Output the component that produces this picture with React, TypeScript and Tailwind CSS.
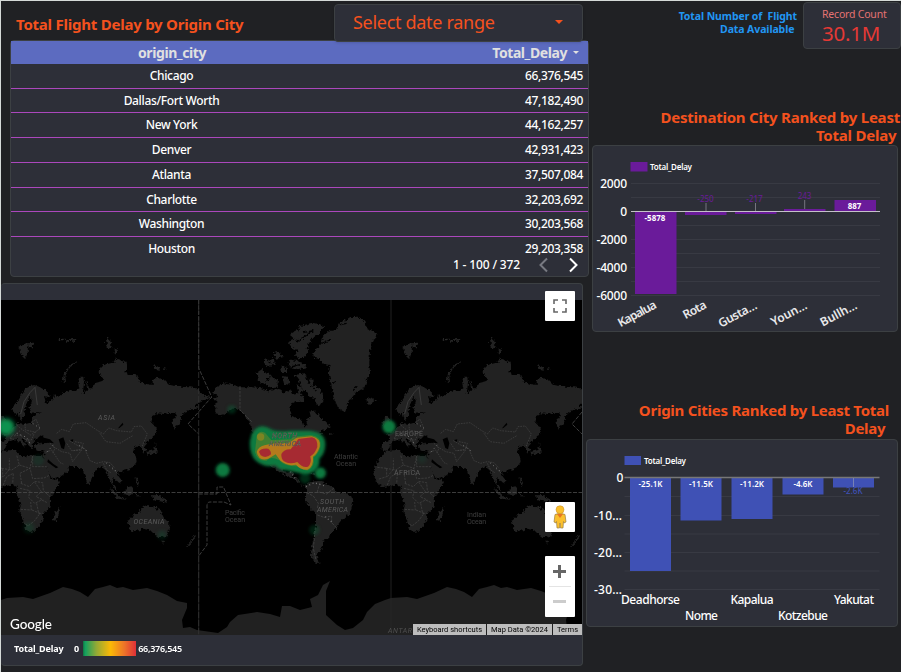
import React from "react";

const rows: [string, string][] = [
  ["Chicago", "66,376,545"],
  ["Dallas/Fort Worth", "47,182,490"],
  ["New York", "44,162,257"],
  ["Denver", "42,931,423"],
  ["Atlanta", "37,507,084"],
  ["Charlotte", "32,203,692"],
  ["Washington", "30,203,568"],
  ["Houston", "29,203,358"],
];

function DelayTable() {
  return (
    <section className="ml-[9px] flex h-[237px] w-[579px] shrink-0 flex-col rounded-sm border border-[#3c4043] bg-[#2d2f38] text-[12px] text-white">
      <div className="flex h-[23px] shrink-0 items-center bg-[#5c6bc0] text-[14px] font-bold tracking-[-0.42px] text-[#e0e0e0]">
        <span className="w-[322px] text-center">origin_city</span>
        <span className="flex flex-1 items-center justify-end pr-[9px]">
          Total_Delay
          <svg width="6" height="4" className="ml-[6px]"><path d="M0 0h6L3 3z" fill="#e0e0e0" /></svg>
        </span>
      </div>
      <div className="grid shrink-0 grid-rows-[25px_24px_25px_25px_25px_24px_25px_24px]">
        {rows.map(([city, delay], i) => (
          <div key={city} className={"flex items-center font-medium " + (i < 7 ? "border-b border-[#ab47bc]" : "")}>
            <span className="w-[321px] text-center tracking-[-0.34px]">{city}</span>
            <span className="flex-1 pr-[5px] text-right tracking-[-0.35px]">{delay}</span>
          </div>
        ))}
      </div>
      <div className="-mt-[6px] flex h-[20px] items-center justify-end pr-[9px]">
        <span className="mr-[17px] font-medium tracking-[-0.15px]">1 - 100 / 372</span>
        <svg width="42" height="16" fill="none" strokeWidth="2">
          <path d="M10 1.500 3.500 8 10 14.500" stroke="#777981" />
          <path d="M33 1.500 39.500 8 33 14.500" stroke="#fff" />
        </svg>
      </div>
    </section>
  );
}

/* Europe, Asia, Africa and Oceania; drawn on both sides of the Americas. */
function OldWorld() {
  return (
    <g transform="translate(0 280) scale(.33333)">
      <g fill="#212121" filter="url(#coast)">
        <path d="M36 390 42 375 55 360 62 345 75 328 90 318 105 314 120 322 138 332 152 345 148 352 132 348 138 370 158 358 162 345 175 350 190 338 210 330 228 332 238 325 234 302 240 290 250 290 252 310 248 342 262 330 256 300 268 325 276 325 282 310 300 305 312 300 295 275 300 262 320 252 340 248 345 235 360 240 380 248 382 265 372 277 385 285 410 285 420 305 440 312 458 315 458 300 470 292 495 300 510 315 540 320 570 322 590 325 610 345 635 352 615 360 595 370 585 378 595 386 575 388 555 395 545 405 540 430 520 446 518 425 530 400 515 398 490 402 465 400 455 407 455 430 470 440 470 455 460 472 440 485 432 494 440 515 430 517 425 500 415 497 402 505 400 515 408 530 410 545 400 560 385 568 362 576 350 580 358 592 368 604 355 610 345 598 338 590 335 604 345 620 352 632 344 628 332 606 325 588 318 572 305 560 292 565 285 578 275 595 270 612 262 608 255 590 250 572 238 562 215 560 205 556 207 570 180 592 155 595 145 578 132 548 130 530 135 515 110 512 104 498 112 490 145 489 150 484 128 478 130 466 110 475 98 490 100 503 90 503 82 490 70 477 62 474 78 492 72 500 60 488 50 478 38 480 22 485 16 505 5 512 -7 509 -6 486 12 485 18 470 8 461 25 457 42 442 50 430 62 430 75 432 94 428 98 412 108 402 122 396 94 398 88 384 96 362 88 350 76 380 72 408 62 422 56 398 48 405Z" />
        <path d="M3 515 25 511 45 510 58 525 75 530 100 525 130 530 134 547 144 574 153 597 178 600 180 607 165 632 149 655 152 682 131 700 128 720 116 740 102 754 80 757 74 735 58 695 62 675 57 655 48 638 50 620 38 614 18 618-2 621-22 608-32 585-30 565-12 535Z" />
        <path d="M177 680 180 696 168 724 159 720 162 704Z" />
        <path d="M383 720 395 710 415 698 430 680 445 675 452 682 468 677 470 694 478 685 490 710 507 730 510 747 498 771 479 775 462 762 450 750 430 746 410 752 391 756Z M481 782 496 782 489 792Z M580 765 588 770 570 794 556 804 574 784Z" />
        <path d="M455 646 475 645 496 658 502 668 480 664 464 662Z M328 624 344 634 362 652 382 660 354 656 338 638Z M370 638 382 622 398 618 398 646 378 648Z M406 588 418 610 412 622Z M402 632 420 650 410 648Z" />
        <path d="M471 476 466 498 474 518 456 520 440 524 440 516 462 510Z" />
        <path d="M237 242 210 262 196 288 198 310 188 306 192 280 214 252Z M55 200 82 190 84 212 74 240 64 220Z M80 190 104 188 94 206Z M320 170 332 182 335 202 325 206 318 184Z M344 203 355 213 344 225Z M460 256 482 262 478 270 462 266Z M490 264 501 267 492 270Z" />
        <path d="M173 180 195 178 M198 184 218 176 228 182" stroke="#292929" strokeWidth="4" strokeDasharray="8 5" />
        <path d="M-2 440-8 425 4 420Z M3 403 14 410 18 440 5 450 2 430Z" />
      </g>
      <g fill="#000">
        <path d="M112 480 122 466 132 473 150 478 162 490 138 487 117 489Z M176 478 190 472 196 490 192 508 184 504Z M210 480 220 478 218 486Z M354 445 368 428 370 434 358 444Z M144 538 160 552 175 562 168 565 142 546Z" />
      </g>
      <g fill="none" stroke="#474747" strokeWidth="2">
        <path d="M62 402 72 365 90 338 105 322 112 375" />
        <path strokeDasharray="5 3" d="M170 460 185 448 208 455 220 432 258 428 290 450 310 462 326 444 350 452 394 456 402 440 424 438 442 462 425 502M208 482 235 498 254 506 270 542 290 550 310 545 330 548 345 565M300 460 318 485 360 490 400 466M160 500 185 515 210 520 218 545 245 510 215 512 200 490M130 520 155 510 180 548 190 552M225 485 250 490 244 508 220 512M50 435 68 450 92 465 120 446 108 418 92 428M60 452 42 468 60 465 77 480 94 480 102 462M75 432 76 450 108 457M70 475 88 484 90 495M40 463 30 475 42 478M150 490 165 505 158 520M310 550 320 570 332 578M336 566 360 586" />
        <path strokeDasharray="7 3" d="M5 565 35 570 58 555 50 525M10 590 28 568 28 535M58 555 90 565 98 528 98 560 140 560M65 610 60 580 90 565 98 596 132 594 148 586M62 610 88 620 104 604 128 608 130 632 150 650M60 625 90 632 86 652 104 670 125 660 142 668M62 688 94 690 92 666M96 690 120 700 104 722 84 738 74 730M10 615 20 590 40 580 38 612M104 606 124 635 108 650 130 660M110 670 116 700 132 700M-20 562 8 565 8 590-18 598" />
      </g>
      <g fill="none" stroke="#777" strokeWidth="3" strokeDasharray="3 9">
        <path d="M50 460 80 472 92 495M98 430 120 445M238 496 260 512M318 548 350 575M142 515 164 490" />
      </g>
    </g>
  );
}

function NewWorld() {
  return (
    <g transform="translate(190 300) scale(.33333)">
      <g fill="#212121" filter="url(#coast)">
        <path d="M68 298 85 290 68 275 78 262 100 250 130 255 150 262 190 262 215 265 235 274 262 266 280 277 300 270 312 285 325 278 320 255 335 262 333 295 305 310 300 328 305 348 325 355 338 364 345 384 352 376 348 358 362 350 358 330 374 332 390 352 405 362 422 380 400 392 385 395 398 402 378 418 365 440 345 455 335 470 342 492 328 475 290 482 278 505 290 518 310 515 308 530 325 536 328 552 345 558 362 552 358 562 335 557 318 540 290 528 270 516 245 500 225 478 200 450 192 428 190 395 178 368 162 345 150 332 130 325 108 340 83 364 101 345 75 340 82 325 68 315 84 306Z" />
        <path d="M345 555 362 545 380 543 405 550 430 562 440 576 465 580 488 592 490 605 479 642 455 660 440 684 422 700 414 718 398 724 394 748 380 766 385 786 393 792 373 786 362 766 368 725 378 682 378 643 360 625 344 597 351 574Z" />
        <path d="M370 160 395 130 400 108 414 95 440 88 450 68 480 52 502 50 527 64 530 85 562 100 548 128 540 152 538 190 540 220 522 265 500 275 480 300 465 337 445 325 430 290 425 260 415 210 420 195 395 190 388 176 372 174Z" />
        <path d="M300 105 315 92 326 90 330 78 370 68 390 73 407 80 388 100 372 112 358 128 350 145 358 152 344 169 322 176 315 166 326 150 306 145 295 126 314 118Z M315 225 345 220 354 236 370 240 372 256 390 268 402 296 388 318 374 306 378 294 358 290 350 276 336 270 332 250Z M200 218 218 206 222 220 240 222 252 236 264 240 262 260 240 262 220 250 204 246Z M225 195 222 178 238 180 252 174 254 194 240 200Z M270 200 292 200 294 216 272 216Z M276 228 296 230 298 254 282 252Z M298 178 324 184 348 196 346 206 306 206 295 196Z M248 160 270 155 278 172 260 176Z M308 282 340 290 345 303 320 307Z" />
        <path d="M525 300 545 292 558 301 540 312Z M308 505 340 502 358 514 336 512Z M356 518 379 520 374 526Z M416 398 430 402 418 406Z" />
      </g>
      <path fill="none" stroke="#000" strokeWidth="4" filter="url(#coast)" d="M340 98 370 92 320 126M232 180 245 190M350 232 360 250 380 275M285 205 330 194M240 230 230 242M310 70 292 92M450 74 470 70M395 130 420 120M525 240 538 230M488 272 500 260M425 250 435 245" />
      <g fill="none" stroke="#4a4a4a" strokeWidth="2" strokeDasharray="8 3">
        <path d="M150 262 150 330 185 365M390 548 382 575 410 582 432 564M350 578 370 588 385 610 382 625M382 645 402 652 425 648 425 668 440 684M376 682 370 745 378 780" />
      </g>
      <path d="M300 515 318 538 M348 560 372 548 405 558 M405 650 430 670" stroke="#707070" strokeWidth="4" strokeDasharray="3 8" fill="none" />
    </g>
  );
}

function WorldMap() {
  return (
    <svg className="block h-[335px] w-[581px]" viewBox="1 300 581 335">
      <defs>
        <filter id="coast" x="-5%" y="-5%" width="110%" height="110%">
          <feTurbulence type="fractalNoise" baseFrequency=".12" numOctaves="2" seed="4" />
          <feDisplacementMap in="SourceGraphic" scale="14" xChannelSelector="R" yChannelSelector="G" />
        </filter>
        <filter id="soft" x="-50%" y="-50%" width="200%" height="200%"><feGaussianBlur stdDeviation="1.9" /></filter>
        <filter id="heat" x="-50%" y="-50%" width="200%" height="200%"><feGaussianBlur stdDeviation="4" /></filter>
      </defs>
      <rect x="1" y="300" width="582" height="335" fill="#000" />
      <OldWorld />
      <NewWorld />
      <g transform="translate(384 0)"><OldWorld /></g>
      <path fill="#212121" d="M1 600 7 598 23 597 33 599 50 593 63 587 72 589 80 592 88 597 95 589 103 587 110 585 117 588 123 587 133 590 147 588 157 591 167 595 177 601 187 603 187 608 182 620 183 628 190 627 197 630 218 633 227 627 230 622 238 615 257 612 270 614 280 617 282 606 290 606 300 610 312 607 310 599 318 595 323 585 330 581 326 591 326 615 337 625 345 630 353 628 363 620 367 612 375 604 385 600 391 598 407 597 417 599 434 593 447 587 456 589 464 592 472 597 479 589 487 587 494 585 501 588 507 587 517 590 531 588 541 591 551 595 561 601 571 603 566 620 567 628 574 627 582 631 582 635 1 635Z" />
      <g fill="none" stroke="#4b4b4b" strokeWidth=".8">
        <path strokeDasharray="4 1.500" d="M1 492.500H582M198.700 300V368L211.700 397 188 424 198.700 434M198.700 494H217V487H223.500L231 505 224 502H210Q207 502 207 506V545L198.700 556M582 412 572 424 582 434" />
        <path d="M198.700 434V635M391 300V635" stroke="#292929" />
        <path d="M198.700 300V635" stroke="#333" strokeDasharray="6 2" />
      </g>
      <g transform="translate(190 300) scale(.33333)" fill="none">
        <g filter="url(#heat)">
          <path fill="#0e7a40" d="M185 402Q203 368 235 383 255 398 300 392L360 392Q408 398 406 435 405 462 388 476 390 500 374 514 350 530 325 518L290 511Q265 511 255 496 220 506 193 478 177 455 180 422Z" />
        </g>
        <g filter="url(#soft)">
          <path fill="#3f8030" d="M200 408Q207 390 225 398L244 420 302 418 310 410 360 405Q397 408 391 442 384 464 371 472 375 500 355 511 338 513 323 499 282 500 268 481 240 467 230 482 202 484 195 456Z" />
          <path fill="#b57a1b" d="M200 456Q204 440 226 435L262 428 295 430 320 413 365 409Q394 415 389 440 382 462 369 470 372 500 352 509 330 509 318 494 290 500 270 481L257 463 235 476Q207 486 200 456Z" />
          <circle cx="212" cy="411" r="11" fill="#7d8424" />
          <path fill="#a62c31" d="M207 455Q213 444 235 446 244 453 243 463 228 478 212 466ZM274 462Q282 447 302 448L325 417 366 412Q384 416 382 441 375 461 361 469 366 490 354 500 338 505 322 486 298 494 282 484 273 477 274 462Z" />
        </g>
        <g filter="url(#heat)" fill="#0e7a40">
          <circle cx="98" cy="510" r="21" /><circle cx="391" cy="519" r="17" />
          <circle cx="597" cy="380" r="20" />
          <circle cx="125" cy="328" r="13" opacity=".3" /><circle cx="373" cy="690" r="16" opacity=".25" />
          <circle cx="345" cy="535" r="16" opacity=".35" />
          <circle cx="-455" cy="480" r="17" opacity=".15" />
        </g>
      </g>
      <g filter="url(#soft)" fill="#0f9250">
        <circle cx="6" cy="427" r="8.500" /><circle cx="29" cy="528" r="5" opacity=".18" /><circle cx="162" cy="535" r="4" opacity=".2" />
        <circle cx="422" cy="459" r="4" opacity=".12" />
      </g>
      <g className="font-['Roboto',sans-serif]" fontSize="7" fill="#5d5d5d">
        <g fontStyle="italic">
          <text x="98" y="419.500" textLength="17">ASIA</text>
          <g fill="#292b24" stroke="#737369" strokeWidth=".3"><text x="272" y="438" textLength="25">NORTH</text><text x="269" y="446" textLength="32">AMERICA</text></g>
          <text x="320" y="504" textLength="24">SOUTH</text>
          <text x="317" y="511.500" textLength="31">AMERICA</text>
          <text x="133.500" y="523.500" textLength="31">OCEANIA</text>
        </g>
        <text x="395" y="436" textLength="28">EUROPE</text>
        <text x="394" y="475" textLength="26">AFRICA</text>
        <text x="388" y="633" textLength="24" fontStyle="italic" fill="#505050">ANTAR</text>
        <g fill="#3e3e3e">
          <text x="225" y="514.500" textLength="20">Pacific</text><text x="225" y="521.500" textLength="20">Ocean</text>
          <text x="334" y="458.500" textLength="24">Atlantic</text><text x="336" y="465.500" textLength="20">Ocean</text>
          <text x="467" y="516.500" textLength="19">Indian</text><text x="467" y="523.500" textLength="19">Ocean</text>
        </g>
      </g>
      <text x="10" y="629" className="font-['Lato',sans-serif]" fontSize="13.500" fontWeight="500" fill="#fff" textLength="42">Google</text>
    </svg>
  );
}

function MapPanel() {
  return (
    <section className="relative mt-[6px] h-[383px] w-[582px] shrink-0 rounded-sm border border-l-0 border-[#3c4043] bg-[#2d2f38] pt-[16px]">
      <WorldMap />
      <div className="flex h-[27px] items-center pl-[13px] text-[9px] font-bold text-white">
        <span className="w-[60px] tracking-[-0.15px]">Total_Delay</span>
        <span>0</span>
        <span className="mr-[2px] ml-[4px] h-[15px] w-[53px] bg-[linear-gradient(90deg,#12733f_0%,#12a060_4%,#91a936_25%,#fbb906_52%,#ed7429_78%,#df3038_100%)]" />
        <span className="font-semibold tracking-[-0.25px]">66,376,545</span>
      </div>
      <div className="absolute top-[7px] right-[7px] flex h-[30px] w-[30px] items-center justify-center rounded-[1px] bg-white">
        <svg width="14" height="14" fill="none" stroke="#666" strokeWidth="1.600"><path d="M1 5V1h4M9 1h4v4M1 9v4h4M9 13h4V9" /></svg>
      </div>
      <div className="absolute top-[218px] right-[7px] flex h-[30px] w-[30px] items-center justify-center rounded-[1px] bg-white">
        <svg width="14" height="24" viewBox="0 0 14 24">
          <path d="M2 9.500Q7 7 12 9.500L13 17 11 18 10.500 16.500 10 23H7.500L7 18 6.500 23H4L3.500 16.500 3 18 1 17Z" fill="#fbc02d" stroke="#9c7f45" strokeWidth=".7" />
          <circle cx="7" cy="4.700" r="4" fill="#fbc02d" stroke="#c98d25" strokeWidth=".5" /><path d="m4 9 3 4 3-4Z" fill="#e87522" />
        </svg>
      </div>
      <div className="absolute top-[272px] right-[7px] h-[61px] w-[30px] rounded-[1px] bg-white">
        <svg width="30" height="61"><path d="M8 15.500H21M14.500 9V22" stroke="#666" strokeWidth="3" /><path d="M4 30.500H26" stroke="#e4e4e4" /><path d="M8 45.500H21" stroke="#ccc" strokeWidth="3" /></svg>
      </div>
      <div className="absolute top-[340px] right-0 flex h-[11px] gap-px font-['Roboto',sans-serif] text-[7.500px] leading-[11px] text-black">
        <span className="w-[73px] bg-[#bdbdbd] text-center">Keyboard shortcuts</span>
        <span className="w-[65px] bg-[#bdbdbd] text-center">Map Data ©2024</span>
        <span className="w-[29px] bg-[#bdbdbd] text-center">Terms</span>
      </div>
    </section>
  );
}

const destBars = [
  { x: 635, top: 212, h: 82 }, { x: 685, top: 212, h: 3 }, { x: 735, top: 212, h: 2 },
  { x: 784, top: 209, h: 2 }, { x: 834.5, top: 200, h: 11 },
];

function DestinationChart() {
  return (
    <section className="ml-[6px] h-[187px] w-[306px] shrink-0 rounded-sm border border-[#3c4043] bg-[#2d2f38]">
      <svg width="304" height="185" viewBox="593 146 304 185" fill="#fff" fontSize="12" fontWeight="500">
        <rect x="630.500" y="162" width="17" height="9.500" fill="#6a1b9a" />
        <text x="650" y="170" fontSize="8" fontWeight="600" textLength="42">Total_Delay</text>
        {[183.5, 197.5, 225.5, 239.5, 253.5, 267.5, 281.5, 295.5].map((y) => <path key={y} d={`M631 ${y}H880`} stroke="#383a43" />)}
        {destBars.map((b) => <rect key={b.x} x={b.x} y={b.top} width="41.500" height={b.h} fill="#6a1b9a" />)}
        <path d="M631 211.500H880" stroke="#c5c1ca" />
        <path d="M706 203V211M755.500 203V211M804.700 200V209" stroke="#777580" />
        <g textAnchor="end" letterSpacing="-.15">
          <text x="627" y="188">2000</text><text x="627" y="216">0</text><text x="627" y="244">-2000</text>
          <text x="627" y="272">-4000</text><text x="627" y="300">-6000</text>
        </g>
        <g textAnchor="middle" fontSize="8">
          <text x="655" y="221" fontWeight="700">-5878</text><text x="854.500" y="209" fontWeight="700">887</text>
          <g fill="#6a1b9a" fontWeight="400"><text x="705.500" y="201.500">-250</text><text x="754.500" y="201.500">-217</text><text x="804.500" y="198.500">243</text></g>
        </g>
        <g textAnchor="end" fontWeight="600" fill="#e8e8ea">
          <text transform="translate(657.500 307.500) rotate(-28)" textLength="42">Kapalua</text><text transform="translate(707.500 307.500) rotate(-28)" textLength="25">Rota</text>
          <text transform="translate(758 308) rotate(-28)" textLength="42">Gusta…</text><text transform="translate(808 308) rotate(-28)" textLength="39">Youn…</text>
          <text transform="translate(858 308) rotate(-28)" textLength="40">Bullh…</text>
        </g>
      </svg>
    </section>
  );
}

const originBars = [
  { x: 630, h: 93, label: "-25.1K", lw: 24 }, { x: 680.5, h: 42.5, label: "-11.5K", lw: 24 },
  { x: 731.5, h: 41, label: "-11.2K", lw: 24 }, { x: 782.5, h: 16.5, label: "-4.6K", lw: 19 }, { x: 833, h: 9.5, label: "", lw: 0 },
];

function OriginChart() {
  return (
    <section className="h-[188px] w-[312px] shrink-0 rounded-sm border border-[#3c4043] bg-[#2d2f38]">
      <svg width="310" height="186" viewBox="587 440 310 186" fill="#fff" fontSize="12" fontWeight="500">
        <rect x="624.500" y="456" width="16.500" height="9" fill="#3f51b5" />
        <text x="644" y="464" fontSize="8" fontWeight="600" textLength="42">Total_Delay</text>
        {[496.5, 515.5, 534, 552.5, 571, 589.5].map((y) => <path key={y} d={`M624.5 ${y}H879.500`} stroke="#383a43" />)}
        {originBars.map((b) => (
          <g key={b.x}>
            <rect x={b.x} y="478" width="41" height={b.h} fill="#3f51b5" />
            {b.label && <text x={b.x + 20.5} y="487" textAnchor="middle" fontSize="8" fontWeight="600" textLength={b.lw}>{b.label}</text>}
          </g>
        ))}
        <path d="M624.500 477.500H879.500" stroke="#777" strokeWidth="1.500" />
        <path d="M853.500 478V487" stroke="#7781b5" />
        <text x="853" y="494" textAnchor="middle" fontSize="8" fill="#3f51b5">-2.6K</text>
        <text x="616.500" y="482">0</text>
        <text x="594" y="519.500" textLength="28">-10…</text><text x="594" y="557" textLength="28">-20…</text><text x="594" y="594" textLength="28">-30…</text>
        <g textAnchor="middle">
          <text x="650.500" y="604" textLength="59">Deadhorse</text><text x="701.500" y="620" textLength="33">Nome</text>
          <text x="752" y="604" textLength="43">Kapalua</text><text x="803" y="620" textLength="50">Kotzebue</text>
          <text x="854" y="604" textLength="40">Yakutat</text>
        </g>
      </svg>
    </section>
  );
}

export default function App() {
  return (
    <main className="flex h-[672px] w-[901px] overflow-hidden border-t border-l border-[#d5dad8] bg-[#202124] font-['Noto_Sans','Open_Sans',sans-serif]">
      <div className="flex w-[585px] shrink-0 flex-col">
        <header className="flex h-[39px] shrink-0 items-start justify-between">
          <h1 className="pt-[13px] pl-[15px] text-[15px] leading-[21px] font-bold tracking-[-0.23px] whitespace-nowrap text-[#f4511e]">Total Flight Delay by Origin City</h1>
          <button className="relative z-10 mt-[3px] mr-[3px] flex h-[38px] w-[249px] items-center justify-between rounded-sm border border-[#3c4043] bg-[#2d2f38] pr-[19px] pb-[2px] pl-[18px] text-[18px] text-[#f4511e] shadow">
            <span className="tracking-[-0.3px] whitespace-nowrap">Select date range</span>
            <svg width="8" height="4"><path d="M0 0h8L4 4z" fill="#f4511e" /></svg>
          </button>
        </header>
        <DelayTable />
        <MapPanel />
      </div>
      <div className="flex w-[315px] shrink-0 flex-col">
        <div className="flex h-[107px] shrink-0 items-start justify-end">
          <p className="pt-[9px] pr-[6px] text-right text-[10.500px] leading-[13px] font-bold tracking-[-0.1px] whitespace-pre text-[#2196f3]">{"Total Number of  Flight\nData Available "}</p>
          <section className="mt-px h-[47px] w-[98px] rounded-sm border border-[#3c4043] bg-[#2d2f38] pt-[4px] pl-[18px]">
            <p className="text-[10.500px] leading-[14px] tracking-[-0.2px] whitespace-nowrap text-[#e57373]">Record Count</p>
            <p className="text-[20.500px] leading-[25px] tracking-[-0.2px] text-[#e53935]">30.1M</p>
          </section>
        </div>
        <h2 className="mr-px h-[37px] shrink-0 text-right text-[15px] leading-[18px] font-bold tracking-[-0.22px] whitespace-pre text-[#f4511e]">{"Destination City Ranked by Least\nTotal Delay "}</h2>
        <DestinationChart />
        <h2 className="mt-[69px] mr-[12px] h-[38px] shrink-0 text-right text-[15px] leading-[18px] font-bold tracking-[-0.26px] whitespace-pre text-[#f4511e]">{"Origin Cities Ranked by Least Total\nDelay "}</h2>
        <OriginChart />
      </div>
    </main>
  );
}
